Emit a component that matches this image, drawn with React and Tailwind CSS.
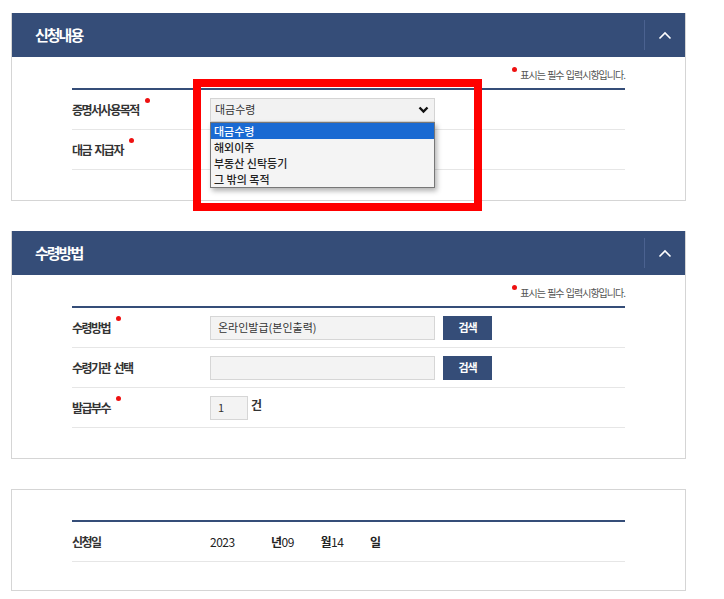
import React from 'react';

const Dot = () => (
    <span className="inline-block w-[5px] h-[5px] rounded-full bg-[#ee1111] ml-[6px] mb-[19px]" />
);

const ChevronUp = () => (
    <svg width="14" height="9" viewBox="0 0 14 9" fill="none">
        <polyline points="1.5,7.5 7,2 12.5,7.5" stroke="#ffffff" strokeWidth="1.6" />
    </svg>
);

const PanelHeader = ({ title }) => (
    <div className="h-[44px] bg-[#354d78] flex items-center justify-between">
        <h3 className="pl-[23px] text-[15px] font-bold text-white tracking-[-2px]">{title}</h3>
        <div className="h-[30px] w-[41px] border-l border-[#4b6290] flex items-center justify-center">
            <ChevronUp />
        </div>
    </div>
);

const Note = () => (
    <div className="h-[31px] pt-[9px] flex items-start justify-end text-[10px] text-[#555] tracking-[-1px] [word-spacing:1px]">
        <span className="inline-block w-[5px] h-[5px] rounded-full bg-[#ee1111] mr-[3px] mt-[1px]" />
        <span className="mt-[1px]">표시는 필수 입력시항입니다.</span>
    </div>
);

const Row = ({ label, required, children }) => (
    <div className="h-[40px] border-b border-[#e6e6e6] flex items-center">
        <div className="w-[138px] flex items-center text-[12px] font-bold text-[#333] tracking-[-1.5px] [word-spacing:2px]">
            {label}{required && <Dot />}
        </div>
        <div className="flex items-center">{children}</div>
    </div>
);

const SearchButton = () => (
    <button className="ml-[8px] w-[49px] h-[24px] bg-[#354d78] text-white text-[11px] font-bold tracking-[-1px]">검색</button>
);

const options = ['대금수령', '해외이주', '부동산 신탁등기', '그 밖의 목적'];

const App = () => {
    return (
        <div className="relative w-[724px] min-h-[599px] bg-white pt-[13px] pl-[11px] font-['Noto_Sans_CJK_KR',sans-serif]">
            {/* 신청내용 */}
            <div className="w-[675px] border border-[#d5d5d5] border-t-0">
                <PanelHeader title="신청내용" />
                <div className="px-[60px] pb-[30px]">
                    <Note />
                    <div className="border-t-2 border-[#354d78]">
                        <Row label="증명서사용목적" required>
                            <div className="relative">
                                <div className="w-[225px] h-[24px] bg-[#f2f2f2] border border-[#d4d4d4] flex items-center justify-between pl-[4px] pr-[5px] text-[11px] text-[#333]">
                                    <span>대금수령</span>
                                    <svg width="11" height="8" viewBox="0 0 11 8" fill="none">
                                        <polyline points="1.5,1.5 5.5,5.5 9.5,1.5" stroke="#111" strokeWidth="2.4" />
                                    </svg>
                                </div>
                                <ul className="absolute left-0 top-[24px] z-10 w-[225px] bg-[#f4f4f4] border border-[#777] shadow-[2px_3px_5px_rgba(0,0,0,0.3)] text-[11px] text-[#222] font-medium">
                                    {options.map((o, i) => (
                                        <li key={o} className={`h-[16px] leading-[16px] pl-[3px] ${i === 0 ? 'bg-[#1a6ad2] text-white' : ''}`}>{o}</li>
                                    ))}
                                </ul>
                            </div>
                        </Row>
                        <Row label="대금 지급자" required />
                    </div>
                </div>
            </div>

            {/* 수령방법 */}
            <div className="mt-[30px] w-[675px] border border-[#d5d5d5] border-t-0">
                <PanelHeader title="수령방법" />
                <div className="px-[60px] pb-[30px]">
                    <Note />
                    <div className="border-t-2 border-[#354d78]">
                        <Row label="수령방법" required>
                            <div className="w-[225px] h-[24px] bg-[#f3f3f3] border border-[#d6d6d6] flex items-center pl-[7px] text-[11px] text-[#333]">온라인발급(본인출력)</div>
                            <SearchButton />
                        </Row>
                        <Row label="수령기관 선택">
                            <div className="w-[225px] h-[24px] bg-[#f3f3f3] border border-[#d6d6d6]" />
                            <SearchButton />
                        </Row>
                        <Row label="발급부수" required>
                            <div className="w-[38px] h-[24px] bg-[#f3f3f3] border border-[#d6d6d6] flex items-center pl-[7px] text-[11px] text-[#333]">1</div>
                            <span className="ml-[3px] mb-[6px] text-[12px] font-bold text-[#333]">건</span>
                        </Row>
                    </div>
                </div>
            </div>

            {/* 신청일 */}
            <div className="mt-[30px] w-[675px] border border-[#d5d5d5]">
                <div className="px-[60px] pt-[30px] pb-[28px]">
                    <div className="border-t-2 border-[#354d78]">
                        <Row label="신청일">
                            <div className="flex items-center text-[12px] text-[#222] tracking-[-0.5px]">
                                <span className="w-[61px]">2023</span>
                                <span className="font-bold">년</span>
                                <span className="w-[39px]">09</span>
                                <span className="font-bold">월</span>
                                <span className="w-[39px]">14</span>
                                <span className="font-bold">일</span>
                            </div>
                        </Row>
                    </div>
                </div>
            </div>

            {/* 강조 표시 */}
            <div className="absolute left-[193px] top-[79px] w-[289px] h-[132px] border-[8px] border-[#ff0000] pointer-events-none" />
        </div>
    );
};

export default App;
